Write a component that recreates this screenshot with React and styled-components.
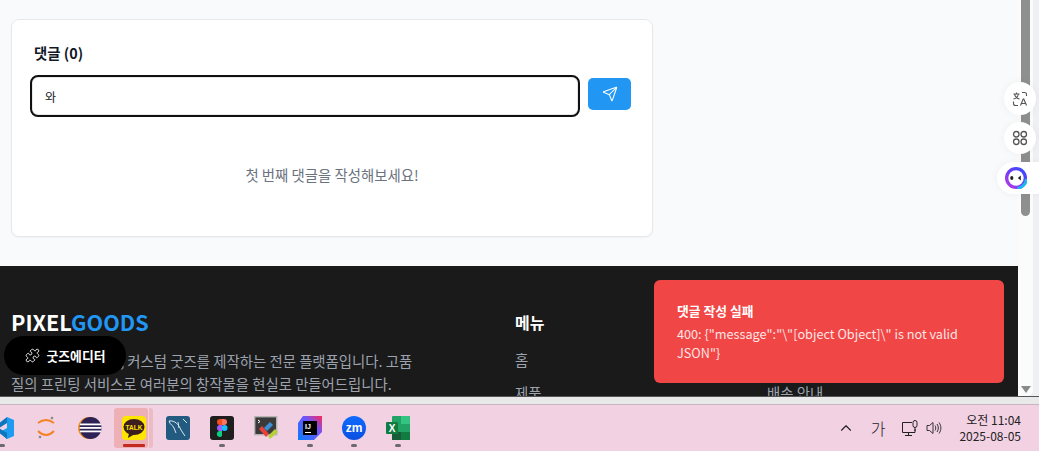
import React from "react";
import styled, { createGlobalStyle } from "styled-components";
import { Send, Puzzle, ChevronUp } from "lucide-react";

const GlobalStyle = createGlobalStyle`
  html, body {
    margin: 0;
    padding: 0;
    width: 100%;
    height: 100%;
    overflow: hidden;
    background: #e9ebee;
  }
  * { box-sizing: border-box; }
  body {
    font-family: "Noto Sans CJK KR", "Noto Sans", sans-serif;
  }
`;

const Desktop = styled.div`
  width: 1039px;
  height: 451px;
  display: flex;
  flex-direction: column;
  overflow: hidden;
  position: relative;
`;
const Browser = styled.div`
  height: 396px;
  display: flex;
  flex-shrink: 0;
  position: relative;
`;
const Page = styled.div`
  width: 1018px;
  background: #f9fafb;
  overflow: hidden;
`;
const Scrollbar = styled.div`
  width: 15px;
  background: #fbfbfb;
  border-radius: 0 0 5px 0;
  display: flex;
  flex-direction: column;
  padding-left: 3px;
  justify-content: space-between;
`;
const Gutter = styled.div`
  width: 6px;
  background: #eef0f3;
`;
const Thumb = styled.div`
  width: 9px;
  height: 216px;
  background: #8f8f8f;
  border-radius: 0 0 5px 5px;
`;
const ArrowDown = styled.div`
  width: 0;
  height: 0;
  margin: 0 0 3px 0;
  border-left: 5px solid transparent;
  border-right: 5px solid transparent;
  border-top: 7px solid #8a8a8a;
`;
const Card = styled.section`
  width: 642px;
  height: 218px;
  margin: 19px 0 29px 11px;
  padding: 21px 21px 0 18px;
  background: #fff;
  border: 1px solid #e7e8ec;
  border-radius: 8px;
  box-shadow: 0 1px 2px rgba(0, 0, 0, 0.04);
`;
const CardTitle = styled.h3`
  margin: 0 0 10px 4px;
  font-size: 14.4px;
  line-height: 24px;
  font-weight: 700;
  color: #111827;
`;
const CommentForm = styled.div`
  display: flex;
  gap: 8px;
  align-items: flex-start;
`;
const CommentInput = styled.div`
  flex: 1;
  height: 42px;
  padding-left: 13px;
  display: flex;
  align-items: center;
  font-size: 12px;
  color: #111827;
  background: #fff;
  border: 2px solid #101010;
  border-radius: 8px;
  box-shadow: inset 0 0 0 1px #e5e7eb;
`;
const SendButton = styled.button`
  width: 43px;
  height: 32px;
  margin-top: 3px;
  border: 0;
  border-radius: 5px;
  background: #2196f3;
  color: #fff;
  display: flex;
  align-items: center;
  justify-content: center;
  padding: 0;
`;
const EmptyText = styled.p`
  margin: 46px 0 0;
  padding-left: 3px;
  text-align: center;
  font-size: 14.4px;
  line-height: 24px;
  color: #6b7280;
`;
const Footer = styled.footer`
  height: 130px;
  background: #1a1a1a;
  padding: 41px 0 0 11px;
  display: flex;
`;
const Brand = styled.div`
  width: 504px;
`;
const Logo = styled.div`
  font-size: 21.6px;
  line-height: 30px;
  font-weight: 700;
  color: #fff;
  span { color: #2196f3; }
`;
const BrandText = styled.p`
  width: 402px;
  margin: 12px 0 0;
  font-size: 14.4px;
  line-height: 23px;
  color: #9ca3af;
`;
const FooterCol = styled.div`
  width: ${(p) => p.$width}px;
`;
const ColTitle = styled.h4`
  margin: 0 0 12px;
  font-size: 16px;
  line-height: 30px;
  height: 30px;
  font-weight: 700;
  color: #fff;
`;
const ColLink = styled.div`
  font-size: 14.4px;
  line-height: 22px;
  margin-bottom: 11px;
  color: #9ca3af;
`;
const Toast = styled.div`
  position: absolute;
  left: 654px;
  top: 280px;
  width: 350px;
  height: 103px;
  padding: 22px 23px 0;
  background: #f14646;
  border-radius: 6px;
  color: #fff;
`;
const ToastTitle = styled.div`
  font-size: 12.8px;
  line-height: 18px;
  font-weight: 700;
`;
const ToastBody = styled.div`
  margin-top: 4px;
  font-size: 12.7px;
  line-height: 19px;
  color: #fde4e4;
`;
const EditorPill = styled.button`
  position: absolute;
  left: 4px;
  top: 336px;
  width: 122px;
  height: 39px;
  border: 0;
  border-radius: 20px;
  background: #000;
  color: #fff;
  font: 700 12.8px "Noto Sans CJK KR", sans-serif;
  display: flex;
  align-items: center;
  justify-content: center;
  gap: 7px;
  padding: 0;
`;
const Fab = styled.div`
  position: absolute;
  left: ${(p) => p.$left}px;
  top: ${(p) => p.$top}px;
  width: ${(p) => p.$width}px;
  height: ${(p) => p.$height}px;
  background: #fff;
  border-radius: ${(p) => (p.$wide ? "16px 0 0 16px" : "50%")};
  box-shadow: 0 0 8px rgba(0, 0, 0, 0.05);
  display: flex;
  align-items: center;
  padding-left: ${(p) => (p.$wide ? 8 : 0)}px;
  justify-content: ${(p) => (p.$wide ? "flex-start" : "center")};
`;
const StatusStrip = styled.div`
  height: 8px;
  flex-shrink: 0;
  background: #e9e9ea;
  border-top: 1px solid #55565a;
`;
const Taskbar = styled.div`
  flex: 1;
  border-top: 1px solid #c4b6bf;
  background: #f2d1e3;
  display: flex;
  align-items: center;
`;
const TaskIcons = styled.div`
  display: flex;
  align-items: stretch;
  margin-left: -20px;
  height: 100%;
`;
const TaskSlot = styled.div`
  width: 44px;
  position: relative;
  display: flex;
  justify-content: center;
  padding-top: 11px;
  svg { position: relative; }
`;
const ActiveBack = styled.i`
  position: absolute;
  top: 3px;
  bottom: 3px;
  left: 2px;
  width: 34px;
  background: #ecb0b5;
  border-radius: 3px;
`;
const ActiveTab = styled.i`
  position: absolute;
  top: 3px;
  bottom: 3px;
  left: 37px;
  width: 4px;
  background: #edbcc3;
  border-radius: 0 3px 3px 0;
`;
const RunDot = styled.i`
  position: absolute;
  bottom: 4px;
  left: 50%;
  margin-left: -3px;
  width: 6px;
  height: 3px;
  border-radius: 2px;
  background: #6d6a6c;
`;
const ActiveBar = styled.i`
  position: absolute;
  bottom: 4px;
  left: 11px;
  width: 22px;
  height: 3px;
  border-radius: 1px;
  background: #c22a22;
`;
const Tray = styled.div`
  margin-left: auto;
  margin-right: 18px;
  display: flex;
  align-items: center;
  color: #222;
`;
const TrayGlyph = styled.span`
  font-size: 16px;
  font-weight: 300;
  width: ${(p) => p.$w}px;
  display: flex;
  justify-content: center;
`;
const Clock = styled.div`
  width: 78px;
  text-align: right;
  font: 12px/16px "Noto Sans CJK KR", sans-serif;
  color: #222;
`;

const VsCode = () => (
  <svg width="24" height="24" viewBox="0 0 24 24">
    <path d="M17 1 L24 4 V20 L17 23 L10 16 L17 12 Z" fill="#1f9cf0" />
    <path d="M17 1 V7 L9 12 L17 17 V23 L3 12 Z" fill="#0e76bd" />
  </svg>
);
const Spring = () => (
  <svg width="24" height="24" viewBox="0 0 24 24" fill="none">
    <path d="M4 7 Q12 1 20 7" stroke="#f58220" strokeWidth="1.8" />
    <path d="M4 15 Q12 23 20 15" stroke="#f58220" strokeWidth="1.8" />
    <circle cx="6" cy="21" r="1.3" fill="#888" />
    <circle cx="18" cy="2" r="1.3" fill="#888" />
  </svg>
);
const Eclipse = () => (
  <svg width="24" height="24" viewBox="0 0 24 24">
    <circle cx="11" cy="12" r="11" fill="#f7941e" />
    <circle cx="12.5" cy="12" r="11" fill="#2c2255" />
    <rect x="2" y="7.5" width="21" height="1.8" fill="#fff" />
    <rect x="1.5" y="11" width="22" height="1.8" fill="#fff" />
    <rect x="2" y="14.5" width="21" height="1.8" fill="#fff" />
  </svg>
);
const KakaoTalk = () => (
  <svg width="24" height="24" viewBox="0 0 24 24">
    <rect width="24" height="24" rx="4" fill="#fee500" />
    <ellipse cx="12" cy="11" rx="10.500" ry="8" fill="#3c1e1e" />
    <path d="M7 17 L6 22 L12 18.500 Z" fill="#3c1e1e" />
    <text x="12" y="13.500" textAnchor="middle" fontSize="6.500" fontWeight="700" fontFamily="Liberation Sans, sans-serif" fill="#fee500">TALK</text>
  </svg>
);
const MySql = () => (
  <svg width="24" height="24" viewBox="0 0 24 24">
    <rect width="24" height="24" rx="3" fill="#235a7f" />
    <path d="M3 5 C9 4 13 9 15 14 L19 20 M3 5 C4 9 7 9 8 12 L10 17 M12 6 L13 12 M17 3 L21 7" stroke="#dbe6ee" strokeWidth="1" fill="none" />
  </svg>
);
const Figma = () => (
  <svg width="24" height="24" viewBox="0 0 24 24">
    <rect width="24" height="24" rx="3" fill="#1e1e1e" />
    <path d="M12 3H10a3 3 0 0 0 0 6h2z" fill="#f24e1e" />
    <path d="M12 3h2a3 3 0 0 1 0 6h-2z" fill="#ff7262" />
    <path d="M12 9H10a3 3 0 0 0 0 6h2z" fill="#a259ff" />
    <circle cx="14.500" cy="12" r="3" fill="#1abcfe" />
    <path d="M12 15H10a3 3 0 1 0 2 5z" fill="#0acf83" />
  </svg>
);
const DevTool = () => (
  <svg width="24" height="24" viewBox="0 0 24 24">
    <rect x="0.700" y="0.700" width="22" height="18" fill="#3a3a3a" stroke="#b5b5b5" strokeWidth="1.400" />
    <path d="M4 4l2 1.500L4 7" stroke="#fff" fill="none" />
    <path d="M5 13l7 8 3-3-7-8z" fill="#e8413c" />
    <path d="M10 12l6-6 3 3-6 6z" fill="#3f8fd6" />
    <path d="M14 20l7-7 3 3-8 7z" fill="#b6cf3a" />
  </svg>
);
const IntelliJ = () => (
  <svg width="24" height="24" viewBox="0 0 24 24">
    <defs>
      <linearGradient id="ij" x1="0" y1="1" x2="1" y2="0">
        <stop offset="0" stopColor="#087cfa" />
        <stop offset="0.6" stopColor="#6b57ff" />
        <stop offset="1" stopColor="#fe2857" />
      </linearGradient>
    </defs>
    <path d="M5 0 H24 V16 L16 24 H0 V7 Z" fill="url(#ij)" />
    <rect x="5" y="5" width="14" height="14" fill="#000" />
    <text x="7" y="12.500" fontSize="7" fontWeight="700" fontFamily="Liberation Sans, sans-serif" fill="#fff">IJ</text>
    <rect x="7" y="16" width="6" height="1" fill="#fff" />
  </svg>
);
const Zoom = () => (
  <svg width="24" height="24" viewBox="0 0 24 24">
    <defs>
      <linearGradient id="zm" x1="0" y1="0" x2="0" y2="1">
        <stop offset="0" stopColor="#0f6bff" />
        <stop offset="1" stopColor="#0b4fe0" />
      </linearGradient>
    </defs>
    <circle cx="12" cy="12" r="12" fill="url(#zm)" />
    <text x="12" y="15.500" textAnchor="middle" fontSize="12" fontWeight="700" fontFamily="Liberation Sans, sans-serif" fill="#fff">zm</text>
  </svg>
);
const Excel = () => (
  <svg width="24" height="24" viewBox="0 0 24 24">
    <rect x="6" y="0" width="18" height="24" rx="1" fill="#21a366" />
    <rect x="15" y="0" width="9" height="8" fill="#33c481" />
    <rect x="15" y="16" width="9" height="8" fill="#107c41" />
    <rect x="6" y="16" width="9" height="8" fill="#185c37" />
    <rect x="0" y="6" width="12" height="12" rx="1" fill="#107c41" />
    <text x="6" y="15.500" textAnchor="middle" fontSize="10" fontWeight="700" fontFamily="Liberation Sans, sans-serif" fill="#fff">X</text>
  </svg>
);
const Translate = () => (
  <svg width="16" height="16" viewBox="0 0 16 16" fill="none" stroke="#555" strokeWidth="1.100">
    <path d="M1.500 3h6M4.500 1.500V3M2.500 3c.5 2.500 2.500 4.500 5 5M6.500 3c-.5 2.500-2.500 4.500-5 5" />
    <path d="M10 1.500h2.500a2 2 0 0 1 2 2V5" />
    <path d="M1.500 10.500V12.500a2 2 0 0 0 2 2H6" />
    <path d="M8.500 14.500l2.700-6.500h.6l2.700 6.500M9.500 12.500h4" />
  </svg>
);
const Grid = () => (
  <svg width="16" height="16" viewBox="0 0 16 16" fill="none" stroke="#555" strokeWidth="1.300">
    <rect x="1.500" y="1.500" width="5.500" height="5.500" rx="2.700" />
    <rect x="9" y="1.500" width="5.500" height="5.500" rx="2.700" />
    <rect x="1.500" y="9" width="5.500" height="5.500" rx="2.700" />
    <rect x="9" y="9" width="5.500" height="5.500" rx="2.700" />
  </svg>
);
const Face = () => (
  <svg width="22" height="22" viewBox="0 0 22 22">
    <defs>
      <linearGradient id="face" x1="0" y1="1" x2="1" y2="0">
        <stop offset="0" stopColor="#c83be0" />
        <stop offset="0.5" stopColor="#6a3cf5" />
        <stop offset="1" stopColor="#2b50ff" />
      </linearGradient>
    </defs>
    <circle cx="11" cy="11" r="11" fill="url(#face)" />
    <path d="M21.500 12a10.500 10.500 0 0 1-9 9.500" stroke="#1fb6f0" strokeWidth="3" fill="none" />
    <circle cx="11" cy="11" r="7.700" fill="#fff" />
    <ellipse cx="6.800" cy="11" rx="1.600" ry="2" fill="#222" />
    <path d="M15.800 8.500 L12.800 11 L15.800 13.500 Z" fill="#222" />
  </svg>
);
const NetworkIcon = () => (
  <svg width="18" height="17" viewBox="0 0 18 17" fill="none" stroke="#222" strokeWidth="1">
    <path d="M11 2.500H1.500v10H14V9" />
    <path d="M7.500 12.500v3M4 15.500h7" />
    <rect x="12" y="0.500" width="4" height="7" rx="2" />
    <path d="M14 7.500V11" />
  </svg>
);
const VolumeIcon = () => (
  <svg width="17" height="16" viewBox="0 0 17 16" fill="none" stroke="#222" strokeWidth="0.900">
    <path d="M1 5.500h2.500L7 2.500v11l-3.500-3H1z" />
    <path d="M9 5.500c1 1.500 1 3.500 0 5" />
    <path d="M11 4c1.800 2.500 1.800 5.500 0 8" />
    <path d="M13 2.500c2.500 3.500 2.500 7.500 0 11" />
  </svg>
);

const taskApps = [
  { key: "vs", Icon: VsCode, dot: true },
  { key: "spring", Icon: Spring },
  { key: "eclipse", Icon: Eclipse },
  { key: "talk", Icon: KakaoTalk, active: true },
  { key: "mysql", Icon: MySql },
  { key: "figma", Icon: Figma, dot: true },
  { key: "dev", Icon: DevTool },
  { key: "ij", Icon: IntelliJ, dot: true },
  { key: "zoom", Icon: Zoom, dot: true },
  { key: "excel", Icon: Excel, dot: true },
];

export default function App() {
  return (
    <Desktop>
      <GlobalStyle />
      <Browser>
        <Page>
          <Card>
            <CardTitle>댓글 (0)</CardTitle>
            <CommentForm>
              <CommentInput>와</CommentInput>
              <SendButton>
                <Send size={16} strokeWidth={1.6} />
              </SendButton>
            </CommentForm>
            <EmptyText>첫 번째 댓글을 작성해보세요!</EmptyText>
          </Card>
          <Footer>
            <Brand>
              <Logo>
                PIXEL<span>GOODS</span>
              </Logo>
              <BrandText>
                픽셀굿즈는 맞춤형, 커스텀 굿즈를 제작하는 전문 플랫폼입니다. 고품질의 프린팅 서비스로 여러분의 창작물을 현실로 만들어드립니다.
              </BrandText>
            </Brand>
            <FooterCol $width={252}>
              <ColTitle>메뉴</ColTitle>
              <ColLink>홈</ColLink>
              <ColLink>제품</ColLink>
            </FooterCol>
            <FooterCol $width={200}>
              <ColTitle />
              <ColLink>&nbsp;</ColLink>
              <ColLink>배송 안내</ColLink>
            </FooterCol>
          </Footer>
        </Page>
        <Scrollbar>
          <Thumb />
          <ArrowDown />
        </Scrollbar>
        <Gutter />
        <Toast>
          <ToastTitle>댓글 작성 실패</ToastTitle>
          <ToastBody>400: {'{"message":"\\"[object Object]\\" is not valid JSON"}'}</ToastBody>
        </Toast>
        <EditorPill>
          <Puzzle size={15} strokeWidth={1.5} />
          굿즈에디터
        </EditorPill>
        <Fab $left={1004} $top={82} $width={32} $height={33}>
          <Translate />
        </Fab>
        <Fab $left={1004} $top={122} $width={32} $height={32}>
          <Grid />
        </Fab>
        <Fab $left={997} $top={162} $width={42} $height={32} $wide>
          <Face />
        </Fab>
      </Browser>
      <StatusStrip />
      <Taskbar>
        <TaskIcons>
          {taskApps.map(({ key, Icon, dot, active }) => (
            <TaskSlot key={key}>
              {active && <ActiveBack />}
              {active && <ActiveTab />}
              <Icon />
              {dot && <RunDot />}
              {active && <ActiveBar />}
            </TaskSlot>
          ))}
        </TaskIcons>
        <Tray>
          <TrayGlyph $w={32}>
            <ChevronUp size={18} strokeWidth={1.5} />
          </TrayGlyph>
          <TrayGlyph $w={32}>가</TrayGlyph>
          <TrayGlyph $w={32}>
            <NetworkIcon />
          </TrayGlyph>
          <TrayGlyph $w={17}>
            <VolumeIcon />
          </TrayGlyph>
          <Clock>
            오전 11:04
            <br />
            2025-08-05
          </Clock>
        </Tray>
      </Taskbar>
    </Desktop>
  );
}
